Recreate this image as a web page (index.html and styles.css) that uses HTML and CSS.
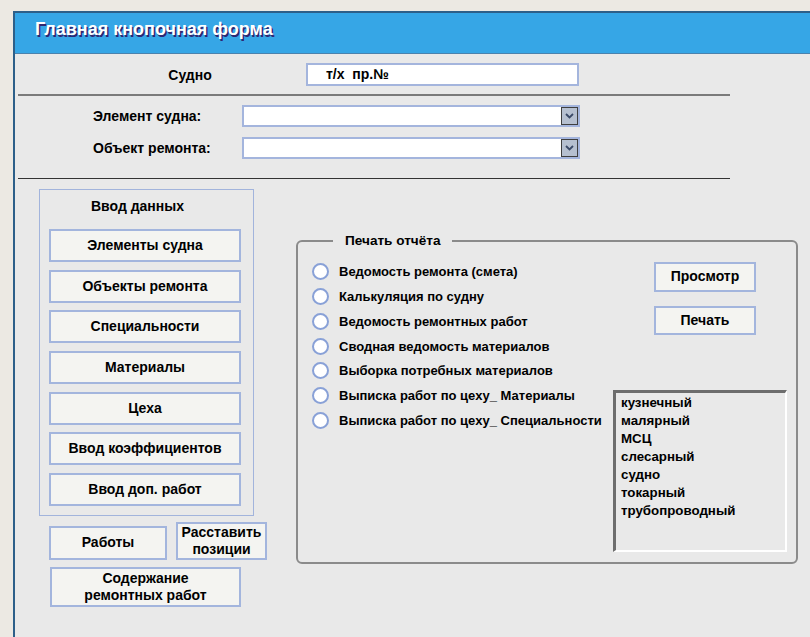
FILE: index.html
```html
<!DOCTYPE html>
<html lang="ru">
<head>
<meta charset="utf-8">
<title>Главная кнопочная форма</title>
<link rel="stylesheet" href="styles.css">
</head>
<body>
<div class="window">
  <div class="titlebar">Главная кнопочная форма</div>
  <div class="form">
    <div class="vessel-row">
      <span class="vessel-label">Судно</span>
      <div class="textbox">т/х&nbsp; пр.№</div>
    </div>
    <div class="rule rule-light"></div>

    <div class="combo-rows">
      <div class="combo-row">
        <span class="combo-label">Элемент судна:</span>
        <div class="combo">
          <span class="combo-btn"><svg width="9" height="6" viewBox="0 0 9 6"><polyline points="1,1 4.5,4.5 8,1" fill="none" stroke="#3b4a68" stroke-width="1.8"/></svg></span>
        </div>
      </div>
      <div class="combo-row">
        <span class="combo-label">Объект ремонта:</span>
        <div class="combo">
          <span class="combo-btn"><svg width="9" height="6" viewBox="0 0 9 6"><polyline points="1,1 4.5,4.5 8,1" fill="none" stroke="#3b4a68" stroke-width="1.8"/></svg></span>
        </div>
      </div>
    </div>
    <div class="rule rule-dark"></div>

    <div class="main">
      <div class="left-col">
        <div class="group">
          <div class="group-title">Ввод данных</div>
          <div class="group-buttons">
            <button class="btn">Элементы судна</button>
            <button class="btn">Объекты ремонта</button>
            <button class="btn">Специальности</button>
            <button class="btn">Материалы</button>
            <button class="btn">Цеха</button>
            <button class="btn">Ввод коэффициентов</button>
            <button class="btn">Ввод доп. работ</button>
          </div>
        </div>
        <div class="extra">
          <button class="btn btn-works">Работы</button>
          <button class="btn btn-place">Расставить<br>позиции</button>
        </div>
        <button class="btn btn-content">Содержание<br>ремонтных работ</button>
      </div>

      <fieldset class="print">
        <legend>Печать отчёта</legend>
        <div class="print-body">
          <div class="radios">
            <label class="radio-row"><span class="radio"></span>Ведомость ремонта (смета)</label>
            <label class="radio-row"><span class="radio"></span>Калькуляция по судну</label>
            <label class="radio-row"><span class="radio"></span>Ведомость ремонтных работ</label>
            <label class="radio-row"><span class="radio"></span>Сводная ведомость материалов</label>
            <label class="radio-row"><span class="radio"></span>Выборка потребных материалов</label>
            <label class="radio-row"><span class="radio"></span>Выписка работ по цеху_ Материалы</label>
            <label class="radio-row"><span class="radio"></span>Выписка работ по цеху_ Специальности</label>
          </div>
          <div class="side">
            <button class="btn btn-preview">Просмотр</button>
            <button class="btn btn-print">Печать</button>
            <ul class="listbox">
              <li>кузнечный</li>
              <li>малярный</li>
              <li>МСЦ</li>
              <li>слесарный</li>
              <li>судно</li>
              <li>токарный</li>
              <li>трубопроводный</li>
            </ul>
          </div>
        </div>
      </fieldset>
    </div>
  </div>
</div>
</body>
</html>
```

FILE: styles.css
```css
html, body {
  margin: 0;
  height: 637px;
  overflow: hidden;
}

body {
  background: #ece9e3;
  font-family: "Liberation Sans", Arial, sans-serif;
  font-weight: bold;
  color: #000;
}

/* form window */
.window {
  margin: 11px 0 0 13px;
  height: 626px;
  box-sizing: border-box;
  border-top: 2px solid #2d5f89;
  border-left: 2px solid #2d5f89;
  background: #e9e9e9;
}

.titlebar {
  height: 40px;
  background: #36a6e6;
  border-bottom: 1px solid #4b82ad;
  padding-left: 20px;
  line-height: 32px;
  font-size: 18px;
  color: #fff;
  text-shadow: 1.5px 1.5px 0 #2e2772;
}

.form {
  padding-left: 3px;
}

/* vessel name */
.vessel-row {
  display: flex;
  align-items: center;
  padding-top: 9px;
}

.vessel-label {
  width: 120px;
  margin-left: 112px;
  text-align: center;
  font-size: 14px;
}

.textbox {
  margin-left: 56px;
  width: 273px;
  height: 23px;
  box-sizing: border-box;
  border: 2px solid #a4b5dd;
  background: #fff;
  padding-left: 18px;
  font-size: 14px;
  line-height: 19px;
}

.rule {
  width: 712px;
}

.rule-light {
  height: 2px;
  background: #7b7b7b;
  margin-top: 8px;
}

.rule-dark {
  height: 1px;
  background: #333;
  margin-top: 19px;
}

/* combo boxes */
.combo-rows {
  display: flex;
  flex-direction: column;
  gap: 10px;
  margin-top: 9px;
}

.combo-row {
  display: flex;
  align-items: center;
}

.combo-label {
  width: 149px;
  margin-left: 75px;
  font-size: 14px;
}

.combo {
  width: 338px;
  height: 22px;
  box-sizing: border-box;
  border: 2px solid #a4b5dd;
  background: #fff;
  display: flex;
  justify-content: flex-end;
}

.combo-btn {
  width: 17px;
  height: 18px;
  box-sizing: border-box;
  border: 1px solid #3f3f3f;
  background: #b6c0d0;
  display: flex;
  align-items: center;
  justify-content: center;
}

/* main area */
.main {
  display: flex;
  align-items: flex-start;
}

.left-col {
  margin-left: 21px;
  margin-top: 10px;
  width: 228px;
  flex: none;
}

.btn {
  box-sizing: border-box;
  background: #f4f4f1;
  border: 2px solid #a3b5dd;
  font-family: inherit;
  font-weight: bold;
  font-size: 14px;
  line-height: 17px;
  color: #000;
  padding: 0;
  text-align: center;
  display: block;
}

.group {
  width: 215px;
  box-sizing: border-box;
  border: 1px solid #a2b4dc;
  padding: 8px 0 9px 9px;
}

.group-title {
  padding-left: 42px;
  font-size: 14px;
  line-height: 17px;
  margin-bottom: 14px;
}

.group-buttons {
  display: flex;
  flex-direction: column;
  gap: 7.67px;
}

.group-buttons .btn {
  width: 192px;
  height: 33px;
}

.extra {
  margin: 6px 0 0 10px;
  display: flex;
  align-items: flex-end;
  gap: 9px;
}

.btn-works {
  width: 118px;
  height: 34px;
}

.btn-place {
  width: 91px;
  height: 38px;
}

.btn-content {
  width: 191px;
  height: 40px;
  margin: 7px 0 0 11px;
}

/* report printing */
.print {
  margin: 54px 0 0 29px;
  width: 502px;
  box-sizing: border-box;
  border: 2px solid #8b8b8b;
  border-radius: 6px;
  padding: 10.6px 9px 10px 14px;
  flex: none;
}

.print legend {
  margin-left: 21px;
  padding: 0 11px 0 12px;
  font-size: 13.6px;
  line-height: 16px;
}

.print-body {
  display: grid;
  grid-template-columns: 1fr 174px;
}

.radio-row {
  height: 24.7px;
  display: flex;
  align-items: center;
  gap: 10px;
  font-size: 13px;
  white-space: nowrap;
}

.radio {
  width: 17px;
  height: 17px;
  box-sizing: border-box;
  border: 2px solid #89a1d7;
  border-radius: 50%;
  background: #fff;
  flex: none;
}

.side {
  display: flex;
  flex-direction: column;
  align-items: flex-start;
}

.side .btn {
  margin-left: 41px;
  width: 102px;
}

.btn-preview {
  height: 30px;
  margin-top: 2px;
}

.side .btn-print {
  height: 29px;
  margin-top: 14px;
}

.listbox {
  margin: 55px 0 0;
  width: 174px;
  height: 162px;
  box-sizing: border-box;
  border-style: solid;
  border-width: 3px 2px 2px 3px;
  border-color: #6d6d6d #fff #fff #6d6d6d;
  padding: 1px 0 0 5px;
  list-style: none;
  font-size: 13.3px;
  line-height: 18px;
}
```
